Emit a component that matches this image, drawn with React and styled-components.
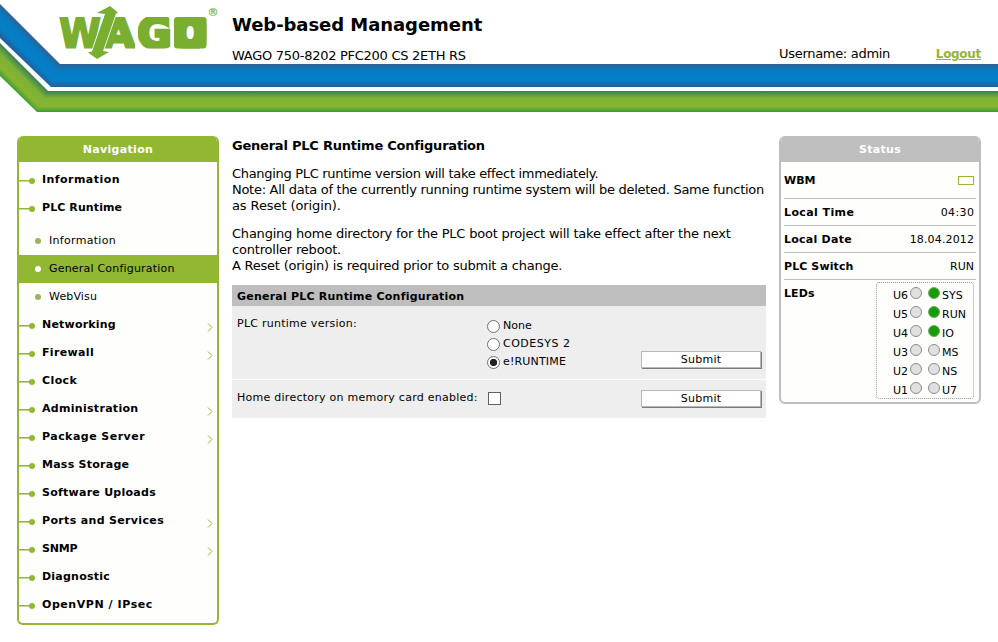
import React from "react";
import styled, { createGlobalStyle } from "styled-components";

const Global = createGlobalStyle`
  * { box-sizing: border-box; }
  body { margin: 0; background: #fff; color: #000; font: 13px/16px "DejaVu Sans", Verdana, sans-serif; }
  h1, h2, p, ul { margin: 0; padding: 0; }
`;
const GREEN = "#92b732";

const Page = styled.div`width: 998px; height: 642px; overflow: hidden; display: flex; flex-direction: column;`;
const Header = styled.header`height: 136px; position: relative; flex: none;`;
const Banner = styled.svg`position: absolute; inset: 0; display: block;`;
const HeaderRow = styled.div`position: relative; display: flex; padding: 13px 17px 0 232px; height: 64px;`;
const Titles = styled.div`width: 547px; white-space: nowrap;`;
const Title = styled.h1`font-size: 18px; line-height: 23px; letter-spacing: -0.06px;`;
const Device = styled.div`margin-top: 12px; font-size: 13px; line-height: 16px; letter-spacing: -0.28px;`;
const Account = styled.div`flex: 1; display: flex; justify-content: space-between; padding-top: 33px; line-height: 16px; white-space: nowrap; letter-spacing: -0.3px;`;
const Logout = styled.a`color: ${GREEN}; font-size: 12px; font-weight: bold; text-decoration: underline;`;

const Body = styled.div`display: flex; align-items: flex-start; padding-left: 17px;`;
const Panel = styled.section`
  width: ${(p) => p.$w}px; height: ${(p) => p.$h}px; flex: none;
  border: 2px solid ${(p) => p.$c}; border-top: 0; border-radius: 6px; overflow: hidden;
  background: #fefefc;
`;
const PanelHead = styled.h2`
  height: 26px; margin: 0 -2px; background: ${(p) => p.$c}; color: #fff; text-align: center;
  font-size: 11px; line-height: 27px; letter-spacing: 0.3px;
`;
const NavList = styled.ul`list-style: none; padding-top: 4px; font-size: 11px;`;
const NavItem = styled.li`
  height: 28px; display: flex; align-items: flex-start; font-weight: bold;
  line-height: 28px; white-space: nowrap; letter-spacing: ${(p) => p.$ls || 0}px;
`;
const SubList = styled.ul`list-style: none; padding: 5px 0 0;`;
const SubItem = styled.li`
  height: 28px; display: flex; align-items: center; gap: 8px; padding-left: 16px; line-height: 27px;
  background: ${(p) => (p.$on ? GREEN : "transparent")}; letter-spacing: ${(p) => p.$ls || 0}px;
`;
const SubLabel = styled.span`height: 28px;`;
const Bullet = styled.i`width: 6px; height: 6px; border-radius: 50%; background: ${(p) => (p.$on ? "#fff" : "#95b95b")};`;
const Icon = styled.svg`flex: none; display: block;`;
const Label = styled.span`flex: 1; padding-left: 7px;`;

const Main = styled.main`width: 534px; margin: 0 13px; padding-top: 2px; white-space: nowrap;`;
const Heading = styled.h2`font-size: 13px; line-height: 16px; margin-bottom: 12px; letter-spacing: -0.22px;`;
const Para = styled.p`margin-bottom: ${(p) => p.$mb}px;`;
const Line = styled.span`display: block; letter-spacing: ${(p) => p.$ls || 0}px;`;
const FormHead = styled.h2`height: 21px; background: #bebebe; padding-left: 5px; font-size: 11px; line-height: 23px; letter-spacing: 0.22px;`;
const FormRow = styled.div`
  height: ${(p) => p.$h}px; margin-bottom: 1px; background: #eee; display: grid;
  grid-template-columns: 250px 154px 121px; padding-left: 5px; font-size: 11px; padding-top: 9px;
`;
const Field = styled.span`padding-top: 1px; letter-spacing: 0.26px;`;
const Choices = styled.div`padding-top: 2px;`;
const Choice = styled.label`display: flex; gap: 3px; height: 18px; line-height: 18px; letter-spacing: ${(p) => p.$ls || 0}px;`;
const Radio = styled.i`
  width: 13px; height: 13px; margin-top: 3px; border: 1px solid #707070; border-radius: 50%;
  background: ${(p) => (p.$on ? "radial-gradient(circle, #222 0 3.3px, #fff 4px)" : "#fff")};
`;
const Check = styled.i`width: 13px; height: 13px; margin: 3px 0 0 1px; border: 1px solid #606060; background: #fff; display: block;`;
const Button = styled.button`
  width: 120px; height: 17px; margin: ${(p) => p.$mt}px 0 0; padding: 1px 0 0; border: 1px solid #b8b8b8;
  box-shadow: 1px 1px 0 #7b7b7b; background: #fff; color: #000;
  font: 11px/14px "DejaVu Sans", sans-serif; letter-spacing: 0.25px;
`;

const StatusBody = styled.div`padding: 0 3px; font-size: 11px; height: 240px;`;
const StatusRow = styled.div`
  height: ${(p) => p.$h}px; display: flex; justify-content: space-between; align-items: center;
  border-bottom: 1px solid #bebebe; padding: ${(p) => p.$pt || 1}px 2px 0 0;
`;
const Spaced = styled.span`
  font-weight: ${(p) => (p.$b ? "bold" : "normal")};
  letter-spacing: ${(p) => p.$ls || 0}px; margin-right: ${(p) => -(p.$ls || 0)}px;
`;
const Blink = styled.i`width: 16px; height: 9px; border: 1px solid ${GREEN}; background: #fff;`;
const LedRow = styled.div`display: flex; justify-content: space-between; padding: 2px 2px 0 0;`;
const LedTitle = styled.b`padding-top: 4px; letter-spacing: 0.1px;`;
const LedBox = styled.div`
  width: 98px; height: 117px; border: 1px dotted #999; border-radius: 3px; padding-top: 2px;
`;
const LedLine = styled.div`height: 19px; display: grid; grid-template-columns: 33px 12px 6px 12px 1fr; align-items: start; line-height: 16px;`;
const LedName = styled.span`padding-top: 3px; text-align: ${(p) => (p.$r ? "right" : "left")}; padding-left: 2px; padding-right: ${(p) => (p.$r ? 2 : 0)}px;`;
const Led = styled.i`width: 12px; height: 12px; margin-top: 2px; border-radius: 50%; border: 1px solid ${(p) => (p.$on ? "#6fae6a" : "#8c8c8c")}; background: ${(p) => (p.$on ? "#189b08" : "#e0e0e0")};`;

const NAV = [
  { name: "Information", ls: 0.45 },
  { name: "PLC Runtime", ls: 0.1 },
  { name: "Networking", ls: 0.2, more: true },
  { name: "Firewall", ls: 0.35, more: true },
  { name: "Clock", ls: 0.4 },
  { name: "Administration", ls: 0.3, more: true },
  { name: "Package Server", ls: 0.47, more: true },
  { name: "Mass Storage", ls: 0.25 },
  { name: "Software Uploads", ls: 0.26 },
  { name: "Ports and Services", ls: 0.34, more: true },
  { name: "SNMP", ls: -0.2, more: true },
  { name: "Diagnostic", ls: 0.22 },
  { name: "OpenVPN / IPsec", ls: 0.56 },
];
const SUB = [
  { name: "Information", ls: 0.3 },
  { name: "General Configuration", ls: 0.2, on: true },
  { name: "WebVisu", ls: 0.15 },
];
const LEDS = [["U6", "SYS", 1], ["U5", "RUN", 1], ["U4", "IO", 1], ["U3", "MS"], ["U2", "NS"], ["U1", "U7"]];

const Branch = () => (
  <Icon width="16" height="28"><path d="M0 14.8h12" stroke={GREEN} strokeWidth="1.6" /><circle cx="13" cy="14.9" r="3" fill={GREEN} /></Icon>
);
const Arrow = () => (
  <Icon width="12" height="28"><path d="M3 12.5l4 4-4 4" fill="none" stroke={GREEN} strokeWidth="1" /></Icon>
);

const BlueStops = () => (
  <><stop offset="0" stopColor="#2d6295" /><stop offset=".3" stopColor="#067cc5" /><stop offset=".7" stopColor="#0480c8" /><stop offset="1" stopColor="#245f99" /></>
);
const GreenStops = () => (
  <><stop offset="0" stopColor="#398155" /><stop offset=".35" stopColor="#80b334" /><stop offset=".75" stopColor="#86b430" /><stop offset="1" stopColor="#389b38" /></>
);

const Brand = () => (
  <Banner width="998" height="136">
    <defs>
      <linearGradient id="blue" x1="0" y1="64" x2="0" y2="87" gradientUnits="userSpaceOnUse">{BlueStops()}</linearGradient>
      <linearGradient id="green" x1="0" y1="91" x2="0" y2="112" gradientUnits="userSpaceOnUse">{GreenStops()}</linearGradient>
      <linearGradient id="blueSlope" x1="27" y1="31" x2="10.5" y2="47.5" gradientUnits="userSpaceOnUse">{BlueStops()}</linearGradient>
      <linearGradient id="greenSlope" x1="24" y1="67" x2="7.5" y2="83.5" gradientUnits="userSpaceOnUse">{GreenStops()}</linearGradient>
      <clipPath id="gBox"><rect x="138" y="17" width="32.5" height="31.5" rx="3" /></clipPath>
      <clipPath id="oBox"><rect x="174" y="17" width="32.5" height="31.5" rx="3" /></clipPath>
      <clipPath id="waBox"><rect x="59" y="17" width="76" height="31.5" /></clipPath>
    </defs>
    <path d="M0 4L60 64H61L52 87H51L0 38Z" fill="url(#blueSlope)" />
    <path d="M60 64H998V87H51Z" fill="url(#blue)" />
    <path d="M0 43L48 91H49L38 112H37L0 76Z" fill="url(#greenSlope)" />
    <path d="M48 91H998V112H37Z" fill="url(#green)" />
    <g fill="#79ae31" stroke="#79ae31" fontFamily="DejaVu Sans" fontWeight="bold">
      <g clipPath="url(#waBox)">
        <text x="59" y="48" fontSize="42" strokeWidth="2" textLength="42" lengthAdjust="spacingAndGlyphs">W</text>
        <text x="102" y="48" fontSize="42" strokeWidth="3" textLength="33" lengthAdjust="spacingAndGlyphs">A</text>
      </g>
      <g clipPath="url(#gBox)">
        <text x="154.5" y="48" fontSize="42" strokeWidth="3.5" textAnchor="middle">G</text>
      </g>
      <g clipPath="url(#oBox)">
        <text x="190.2" y="50" fontSize="48" strokeWidth="10" textAnchor="middle">O</text>
      </g>
    </g>
    <path d="M97 13L110 6L118 12.5L116 13.5L103 51L109 52L97 59L88 52.5L92 51.5L105 14Z" fill="#79ae31" stroke="#fff" strokeWidth="1.6" paintOrder="stroke" />
    <text x="207.5" y="15.5" fontSize="11" fill="#79ae31" stroke="#79ae31" strokeWidth=".2" fontFamily="DejaVu Sans">®</text>
  </Banner>
);

export default function App() {
  return (
    <Page>
      <Global />
      <Header>
        <Brand />
        <HeaderRow>
          <Titles>
            <Title>Web-based Management</Title>
            <Device>WAGO 750-8202 PFC200 CS 2ETH RS</Device>
          </Titles>
          <Account><span>Username: admin</span><Logout>Logout</Logout></Account>
        </HeaderRow>
      </Header>
      <Body>
        <Panel $w={202} $h={489} $c={GREEN}>
          <PanelHead $c={GREEN}>Navigation</PanelHead>
          <NavList>
            {NAV.map(({ name, ls, more }) => (
              <React.Fragment key={name}>
                <NavItem $ls={ls}><Branch /><Label>{name}</Label>{more && <Arrow />}</NavItem>
                {name === "PLC Runtime" && (
                  <SubList>
                    {SUB.map((s) => (
                      <SubItem key={s.name} $on={s.on} $ls={s.ls}><Bullet $on={s.on} /><SubLabel>{s.name}</SubLabel></SubItem>
                    ))}
                  </SubList>
                )}
              </React.Fragment>
            ))}
          </NavList>
        </Panel>
        <Main>
          <Heading>General PLC Runtime Configuration</Heading>
          <Para $mb={12}>
            <Line $ls={-0.31}>Changing PLC runtime version will take effect immediately.</Line>
            <Line $ls={-0.28}>Note: All data of the currently running runtime system will be deleted. Same function</Line>
            <Line $ls={-0.1}>as Reset (origin).</Line>
          </Para>
          <Para $mb={11}>
            <Line $ls={-0.22}>Changing home directory for the PLC boot project will take effect after the next</Line>
            <Line $ls={-0.2}>controller reboot.</Line>
            <Line $ls={-0.23}>A Reset (origin) is required prior to submit a change.</Line>
          </Para>
          <FormHead>General PLC Runtime Configuration</FormHead>
          <FormRow $h={73}>
            <Field>PLC runtime version:</Field>
            <Choices>
              <Choice><Radio />None</Choice>
              <Choice $ls={0.5}><Radio />CODESYS 2</Choice>
              <Choice $ls={0.17}><Radio $on />e!RUNTIME</Choice>
            </Choices>
            <Button $mt={36}>Submit</Button>
          </FormRow>
          <FormRow $h={38}>
            <Field>Home directory on memory card enabled:</Field>
            <Check />
            <Button $mt={1}>Submit</Button>
          </FormRow>
        </Main>
        <Panel $w={202} $h={268} $c="#bebebe">
          <PanelHead $c="#bebebe">Status</PanelHead>
          <StatusBody>
            <StatusRow $h={37}><b>WBM</b><Blink /></StatusRow>
            <StatusRow $h={27} $pt={2}><Spaced $b $ls={0.4}>Local Time</Spaced><Spaced $ls={0.4}>04:30</Spaced></StatusRow>
            <StatusRow $h={27} $pt={2}><Spaced $b $ls={0.25}>Local Date</Spaced><Spaced $ls={0.15}>18.04.2012</Spaced></StatusRow>
            <StatusRow $h={27} $pt={2}><Spaced $b $ls={0.1}>PLC Switch</Spaced><Spaced>RUN</Spaced></StatusRow>
            <LedRow>
              <LedTitle>LEDs</LedTitle>
              <LedBox>
                {LEDS.map(([l, r, on]) => (
                  <LedLine key={l}><LedName $r>{l}</LedName><Led /><span /><Led $on={on} /><LedName>{r}</LedName></LedLine>
                ))}
              </LedBox>
            </LedRow>
          </StatusBody>
        </Panel>
      </Body>
    </Page>
  );
}
